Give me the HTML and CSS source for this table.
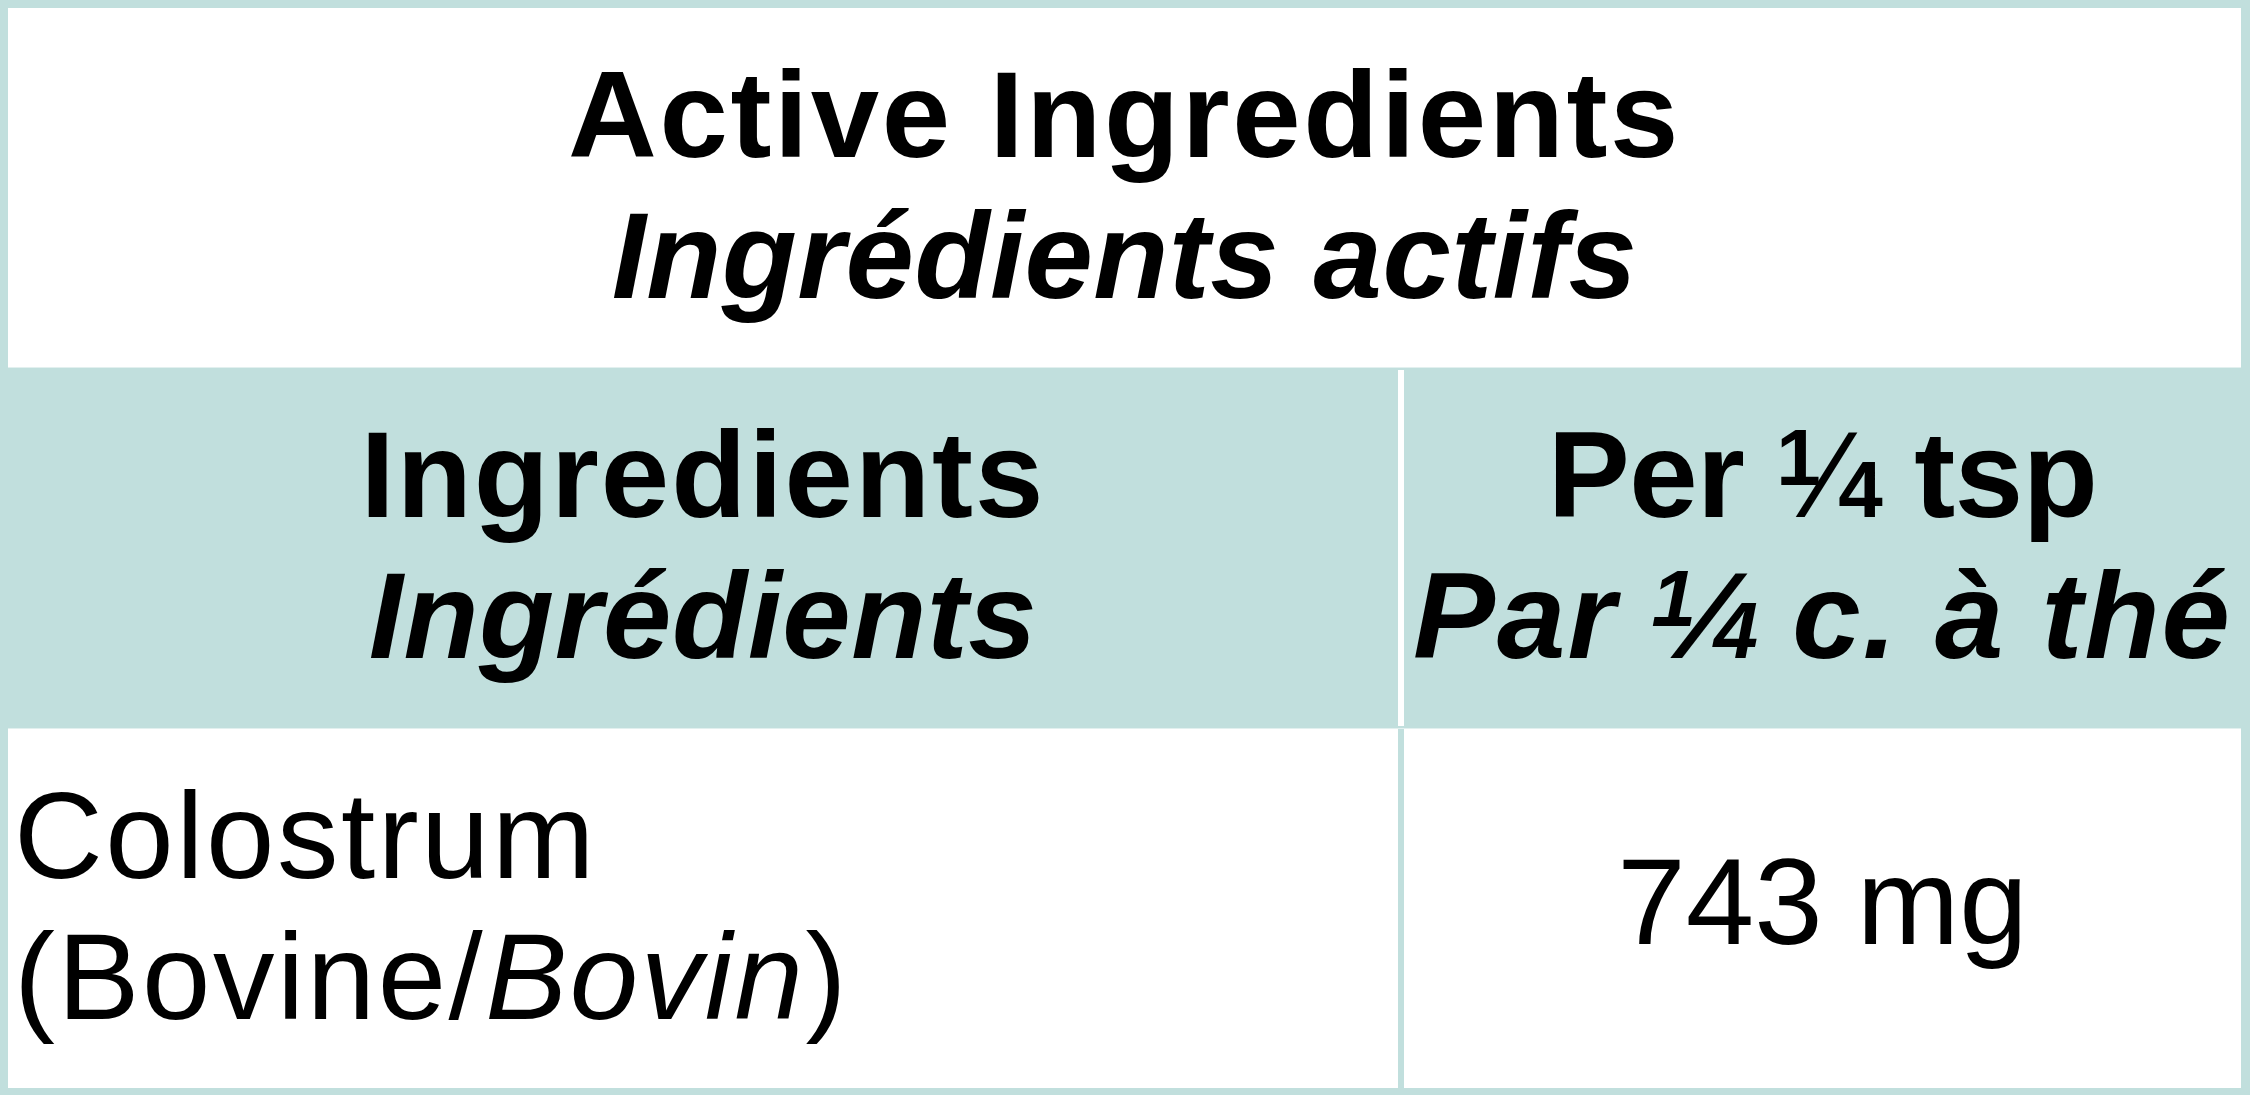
FILE: index.html
```html
<!DOCTYPE html>
<html lang="en">
<head>
<meta charset="utf-8">
<title>Active Ingredients</title>
<link rel="stylesheet" href="styles.css">
</head>
<body>
<div class="panel">
  <div class="title-row">
    <div class="line bold title-en">Active Ingredients</div>
    <div class="line bold ital title-fr">Ingrédients actifs</div>
  </div>
  <div class="grid head-row">
    <div class="cell center">
      <div class="line bold h-en">Ingredients</div>
      <div class="line bold ital h-fr">Ingrédients</div>
    </div>
    <div class="divider divider-white"></div>
    <div class="cell center">
      <div class="line bold p-en">Per <span class="frac"><span class="fn">1</span><span class="fs">⁄</span><span class="fd">4</span></span> tsp</div>
      <div class="line bold ital p-fr">Par <span class="frac"><span class="fn">1</span><span class="fs">⁄</span><span class="fd">4</span></span> c. à thé</div>
    </div>
  </div>
  <div class="grid body-row">
    <div class="cell left">
      <div class="line reg name">Colostrum</div>
      <div class="line reg name">(Bovine/<span class="ital">Bovin</span>)</div>
    </div>
    <div class="divider"></div>
    <div class="cell center">
      <div class="line reg amount">743 mg</div>
    </div>
  </div>
</div>
</body>
</html>
```

FILE: styles.css
```css
html, body {
  margin: 0;
  padding: 0;
  background: #ffffff;
}

body {
  font-family: "Liberation Sans", Arial, sans-serif;
  color: #000000;
}

.panel {
  width: 2250px;
  height: 1095px;
  box-sizing: border-box;
  background: #c1dfdd;
  padding: 8px 9px 7px 8px;
  display: flex;
  flex-direction: column;
}

.title-row {
  background: #ffffff;
  height: 359px;
  display: flex;
  flex-direction: column;
  align-items: center;
  justify-content: center;
  padding-bottom: 6px;
  box-sizing: border-box;
}

.line {
  font-size: 123px;
  line-height: 141px;
  white-space: nowrap;
}

.bold { font-weight: 700; }
.reg { font-weight: 400; }
.ital { font-style: italic; }

.title-en { letter-spacing: 2.6px; }
.title-fr { letter-spacing: 0.4px; }
.h-en { letter-spacing: 2px; }
.h-fr { letter-spacing: 0.5px; }
.p-en { letter-spacing: -0.5px; }
.p-fr { letter-spacing: 2px; }

/* composed vulgar fraction 1/4 */
.frac {
  letter-spacing: 0;
  margin-left: -2px;
  margin-right: -2px;
}
.fn, .fd {
  font-size: 80px;
  line-height: 0;
  font-weight: 700;
}
.fn {
  vertical-align: 32px;
}
.fs {
  font-size: 123px;
  line-height: 0;
  font-weight: 400;
}
.fd {
  margin-left: -3px;
}
.p-fr .fs { font-weight: 700; }

.grid {
  display: grid;
  grid-template-columns: 1390px 6px 1fr;
}

.head-row {
  height: 361px;
  border-top: 1px solid #e2f0ef;
  box-sizing: border-box;
}

.body-row {
  height: 360px;
  border-top: 1px solid #e2f0ef;
  box-sizing: border-box;
}

.cell {
  display: flex;
  flex-direction: column;
  justify-content: center;
  padding-bottom: 6px;
  box-sizing: border-box;
}

.center { align-items: center; }
.left { align-items: flex-start; padding-left: 6px; }

.body-row .cell { background: #ffffff; }

.divider { background: #c1dfdd; }
.divider-white {
  background: #ffffff;
  margin: 2px 0 2px 0;
}

.reg { letter-spacing: 1px; }
.name { letter-spacing: 2.5px; }
.amount { letter-spacing: 0; padding-bottom: 8px; }
```
